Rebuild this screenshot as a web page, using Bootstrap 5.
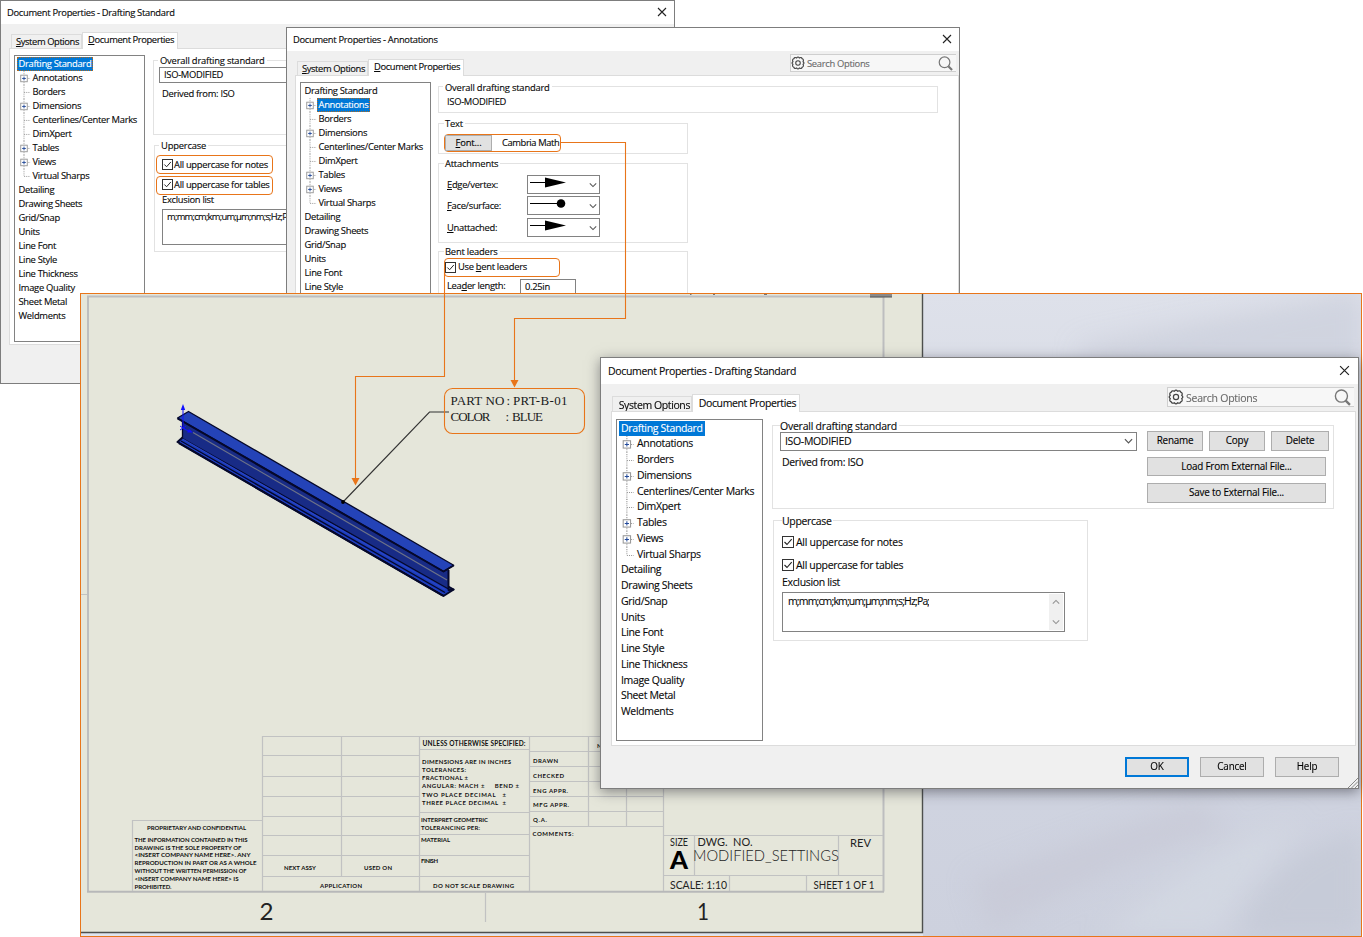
<!DOCTYPE html>
<html lang="en">
<head>
<meta charset="utf-8">
<meta name="viewport" content="width=device-width, initial-scale=1">
<title>Document Properties</title>
<link href="https://cdn.jsdelivr.net/npm/bootstrap@5.3.0/dist/css/bootstrap.min.css" rel="stylesheet">
<style>
  body { width: 1363px; height: 937px; overflow: hidden; background: #fff; color: #080808; font-family: "Open Sans", "Noto Sans", sans-serif; }
  .desk { width: 1363px; height: 937px; overflow: hidden; }
  .win { position: absolute; border: 1px solid #7d7d7d; background: #f0f0f0; font-size: 9.4px; letter-spacing: -.3px; line-height: 14px; white-space: nowrap; -webkit-text-stroke: .12px; --row: 14px; --tree: 131px; --ind: 14px; }
  .win-a { left: 0; top: 0; width: 675px; height: 384px; }
  .win-b { left: 286px; top: 27px; width: 674px; height: 384px; }
  .win-c { left: 600px; top: 357px; width: 759px; height: 432px; font-size: 10.5px; letter-spacing: -.33px; --row: 15.75px; --tree: 147px; --ind: 16px; box-shadow: 0 3px 12px rgba(40,40,50,.5); }
  .drawing, .wires { position: absolute; left: 0; top: 0; }
  .wires { pointer-events: none; }
  .titlebar { height: 23px; padding: 0 7px 0 6px; background: #fff; flex: none; }
  .win-c .titlebar { height: 26px; padding: 0 8px 0 7px; }
  .titlebar svg { margin-top: -1px; }
  .tabrow { height: 24px; padding-left: 10px; flex: none; }
  .win-c .tabrow { height: 27px; padding-left: 11px; }
  .tabx { border: 1px solid #dcdcdc; border-bottom: 0; height: 14px; width: 71px; line-height: 14px; text-align: right; padding-right: 2px; letter-spacing: -.4px; }
  .tabx.on { background: #fff; height: 17px; width: 96px; margin-bottom: -1px; padding-right: 3px; z-index: 1; }
  .win-c .tabx { height: 15px; width: 80px; line-height: 16px; padding-right: 1px; }
  .win-c .tabx.on { height: 18px; width: 108px; padding-right: 3px; }
  .searchx { width: 166px; height: 18px; border: 1px solid #cfcfcf; border-right: 0; background: #f7f7f7; color: #6a6a6a; margin: 0 3px 3px auto; padding: 1px 3px 0 0; }
  .searchx svg { margin-top: -1px; }
  .win-c .searchx { width: 187px; height: 20px; margin: 0 4px 4px auto; letter-spacing: -.25px; }
  .sheetx { border: 1px solid #dcdcdc; background: #fff; margin: 0 0 38px 8px; padding: 6px 0 0 4px; }
  .win-c .sheetx { margin: 0 2px 42px 10px; padding: 7px 0 0 4px; }
  .tree { width: var(--tree); height: 287px; border: 1px solid #828282; padding: .5px 0 0 1.5px; flex: none; }
  .win-c .tree { height: 322px; padding: .5px 0 0 2px; }
  .node { height: var(--row); line-height: var(--row); }
  .node > span { padding: 0 2px; height: 14px; }
  .win-c .node > span { height: var(--row); }
  .node > svg { width: var(--ind); height: var(--row); flex: none; overflow: visible; }
  .node > .sel { background: #0078d7; color: #fff; outline: 1px dotted #b06a20; outline-offset: -1px; }
  .win-c .node > .sel { outline: 0; }
  .grp { border: 1px solid #e2e2e2; }
  .lgd { background: #fff; line-height: 12px; margin-top: -6px; width: fit-content; padding: 0 2px; }
  .win-a .lgd, .win-b .lgd { letter-spacing: -.2px; }
  .boxed { border: 1px solid #828282; background: #fff; }
  .btn.bx { border: 1px solid #adadad; background: #e1e1e1; border-radius: 0; padding: 0; font-size: inherit; letter-spacing: -.15px; line-height: 1; color: #000; }
  .win-c .btn.bx { font-size: 9.9px; letter-spacing: -.2px; }
  .btn.bx.main { border: 2px solid #0078d7; }
  .tick { width: 11px; height: 11px; border: 1px solid #333; background: #fff; flex: none; }
  .win-c .tick { width: 12px; height: 12px; }
  .ring { border: 1px solid #e8751a; border-radius: 4px; }
  .excl { letter-spacing: -.75px; overflow: hidden; }
  .win-c .excl { letter-spacing: -.85px; }
  .lat { font-family: Lato, "Open Sans", sans-serif; }
</style>
</head>
<body>
<svg width="0" height="0" class="position-absolute">
  <defs>
    <symbol id="gear" viewBox="0 0 16 16"><path d="M6.500 2.200Q8 .2 9.500 2.200Q12 1 12.800 3.200Q15 4 13.800 6.500Q15.800 8 13.800 9.500Q15 12 12.800 12.800Q12 15 9.500 13.800Q8 15.800 6.500 13.800Q4 15 3.200 12.800Q1 12 2.200 9.500Q.2 8 2.200 6.500Q1 4 3.200 3.200Q4 1 6.500 2.200Z" fill="none" stroke="#444" stroke-width="1.300"/><circle cx="8" cy="8" r="2.600" fill="none" stroke="#444" stroke-width="1.200"/></symbol>
    <symbol id="lens" viewBox="0 0 16 16"><circle cx="7" cy="6.700" r="5.700" fill="none" stroke="#777" stroke-width="1.300"/><path d="M11 11L15 15" stroke="#777" stroke-width="2.200"/></symbol>
    <symbol id="cross" viewBox="0 0 10 10"><path d="M1 1L9 9M9 1L1 9" stroke="#222" stroke-width="1.100"/></symbol>
    <symbol id="chev" viewBox="0 0 10 6"><path d="M1 1L5 5L9 1" fill="none" stroke="#555" stroke-width="1.300"/></symbol>
    <symbol id="check" viewBox="0 0 10 10"><path d="M1.500 5L4 7.500L8.700 2.200" fill="none" stroke="#222" stroke-width="1.100"/></symbol>
    <symbol id="arrowline" viewBox="0 0 40 12"><path d="M0 5.500H18" stroke="#000"/><path d="M15 .5L36 5.500L15 10.500Z"/></symbol>
    <symbol id="dotline" viewBox="0 0 40 12"><path d="M0 5.500H30" stroke="#000"/><circle cx="31" cy="5.500" r="4.300"/></symbol>
  </defs>
</svg>

<div class="desk position-relative">

  <!-- Drafting standard dialog, back -->
  <section class="win win-a d-flex flex-column">
    <div class="titlebar d-flex align-items-center justify-content-between"><span class="ttl">Document Properties - Drafting Standard</span><svg width="10" height="10"><use href="#cross"/></svg></div>
    <div class="tabrow d-flex align-items-end"><div class="tabx"><u>S</u>ystem Options</div><div class="tabx on"><u>D</u>ocument Properties</div></div>
    <div class="sheetx d-flex flex-fill">
      <div class="tree" data-selected="Drafting Standard"></div>
      <div class="flex-fill" style="margin:5px 20px 0 8px">
        <div class="grp" style="height:75px;padding-left:4px">
          <div class="lgd">Overall drafting standard</div>
          <div class="boxed" style="height:16px;width:300px;padding-left:4px;margin-left:1px">ISO-MODIFIED</div>
          <div style="padding:4px 0 0 4px">Derived from: ISO</div>
        </div>
        <div class="grp" style="height:107px;margin:10px 0 0 1px;padding-left:1px">
          <div class="lgd" style="margin-left:3px">Uppercase</div>
          <div class="ring d-flex align-items-center" style="width:117px;height:19px;margin-top:3px;padding-left:5px"><span class="tick d-flex"><svg width="9" height="9"><use href="#check"/></svg></span><span style="padding-left:1px">All uppercase for notes</span></div>
          <div class="ring d-flex align-items-center" style="width:117px;height:19px;margin-top:2px;padding-left:5px"><span class="tick d-flex" style="margin-top:-2px"><svg width="9" height="9"><use href="#check"/></svg></span><span style="padding-left:1px;margin-top:-2px">All uppercase for tables</span></div>
          <div style="padding-left:6px;margin-top:-2px">Exclusion list</div>
          <div class="boxed excl" style="margin:2px 0 0 6px;width:280px;height:36px;padding-left:4px"><div style="width:119px;overflow:hidden">m;mm;cm;km;um;µm;nm;s;Hz;Pa;</div></div>
        </div>
      </div>
    </div>
  </section>

  <!-- Annotations dialog -->
  <section class="win win-b d-flex flex-column">
    <div class="titlebar d-flex align-items-center justify-content-between"><span class="ttl">Document Properties - Annotations</span><svg width="10" height="10"><use href="#cross"/></svg></div>
    <div class="tabrow d-flex align-items-end"><div class="tabx"><u>S</u>ystem Options</div><div class="tabx on"><u>D</u>ocument Properties</div>
      <div class="searchx d-flex align-items-center"><svg width="14" height="14"><use href="#gear"/></svg><span style="padding-left:2px">Search Options</span><svg class="ms-auto" width="15" height="15"><use href="#lens"/></svg></div></div>
    <div class="sheetx d-flex flex-fill">
      <div class="tree" data-selected="Annotations"></div>
      <div style="margin:4px 0 0 7px;width:500px">
        <div class="grp" style="height:27px;padding-left:4px"><div class="lgd" style="margin-top:-5px">Overall drafting standard</div><div style="padding:1px 0 0 4px">ISO-MODIFIED</div></div>
        <div style="width:250px">
          <div class="grp" style="height:31px;margin-top:10px;padding-left:5px"><div class="lgd" style="padding-left:1px">Text</div>
            <div class="ring d-flex align-items-center" style="width:117px;height:18px;margin-top:4px"><button class="btn bx" style="width:47px;height:16px"><u>F</u>ont...</button><span style="padding-left:10px;letter-spacing:-.4px">Cambria Math</span></div></div>
          <div class="grp" style="height:80px;margin-top:9px;padding-left:5px"><div class="lgd" style="padding-left:1px">Attachments</div>
            <div class="d-flex align-items-center" style="margin-top:5px"><span style="width:83px;padding-left:3px"><u>E</u>dge/vertex:</span><span class="boxed d-flex align-items-center justify-content-between" style="width:73px;height:19px;padding:0 2px"><svg width="40" height="12" style="margin-top:-3px"><use href="#arrowline"/></svg><svg width="8" height="6"><use href="#chev"/></svg></span></div>
            <div class="d-flex align-items-center" style="margin-top:2px"><span style="width:83px;padding-left:3px"><u>F</u>ace/surface:</span><span class="boxed d-flex align-items-center justify-content-between" style="width:73px;height:19px;padding:0 2px"><svg width="40" height="12" style="margin-top:-3px"><use href="#dotline"/></svg><svg width="8" height="6"><use href="#chev"/></svg></span></div>
            <div class="d-flex align-items-center" style="margin-top:3px"><span style="width:83px;padding-left:3px"><u>U</u>nattached:</span><span class="boxed d-flex align-items-center justify-content-between" style="width:73px;height:19px;padding:0 2px"><svg width="40" height="12" style="margin-top:-3px"><use href="#arrowline"/></svg><svg width="8" height="6"><use href="#chev"/></svg></span></div>
          </div>
          <div class="grp" style="height:80px;margin-top:8px;padding-left:5px"><div class="lgd" style="padding-left:1px">Bent leaders</div>
            <div class="ring d-flex align-items-center" style="width:116px;height:19px;padding-bottom:1px"><span class="tick d-flex"><svg width="9" height="9"><use href="#check"/></svg></span><span style="padding-left:2px">Use <u>b</u>ent leaders</span></div>
            <div class="d-flex" style="margin-top:2px"><span style="width:76px;padding-left:3px">Lea<u>d</u>er length:</span><span class="boxed" style="width:56px;height:18px;padding:0 4px">0.25in</span></div>
          </div>
        </div>
      </div>
    </div>
  </section>

  <!-- Drawing sheet -->
  <svg class="drawing" width="1363" height="937" viewBox="0 0 1363 937">
    <defs>
      <linearGradient id="sky" x1="0" y1="0" x2="0" y2="1"><stop offset="0" stop-color="#dee1ea"/><stop offset=".5" stop-color="#d2d6e2"/><stop offset="1" stop-color="#cdd1de"/></linearGradient>
      <filter id="haze" x="-20%" y="-20%" width="140%" height="140%"><feGaussianBlur stdDeviation="12"/></filter>
      <clipPath id="skyclip"><rect x="923" y="294" width="438" height="642"/></clipPath>
    </defs>
    <rect x="80" y="293" width="1282" height="644" fill="#dfe4ee"/>
    <rect x="923" y="293" width="439" height="643" fill="url(#sky)"/>
    <g clip-path="url(#skyclip)"><g filter="url(#haze)">
      <path d="M1080 345Q1230 315 1362 290V365H1080Z" fill="#c8ccd8" opacity=".6"/>
      <path d="M970 880Q1100 830 1200 800L1230 830Q1100 870 990 936Z" fill="#c6c8d5" opacity=".6"/>
      <path d="M1240 936Q1270 850 1362 830V936Z" fill="#c2c6d3" opacity=".6"/>
      <path d="M1100 936Q1200 850 1300 820L1270 860Q1230 900 1220 936Z" fill="#d6dae5" opacity=".6"/>
    </g></g>
    <rect x="81" y="294" width="841" height="638" fill="#e5e6da"/>
    <path d="M922.500 294V932.500H81" fill="none" stroke="#4d4f4d" stroke-width="1.400"/>
    <path d="M88 892V296.500H883.500V891.500" fill="none" stroke="#bdbebf" stroke-width="2"/>
    <path d="M87 891.700H884" stroke="#b7b8b9" stroke-width="2"/>
    <rect x="870" y="294" width="22" height="3" fill="#8a8a8a"/><path d="M870 297H892" stroke="#555"/>
    <path d="M690 294.500h1.500M713 294.500h2M764 294.500h3" stroke="#777"/>
    <g fill="none" stroke="#c1c2c2" stroke-width="1.200">
      <path d="M81 594.500H87M485.500 893V922"/>
      <path d="M132.500 891V820.500H262.500M262.500 891V736.500H664M341.500 737V876M419.500 737V891M529.500 737V891M588.500 737V826M626.500 737V826M663.500 737V891"/>
      <path d="M263 755.500H419M263 776.500H419M263 796.500H419M263 816.500H419M263 835.500H419M263 855.500H529M263 876.500H529M419 749.500H529M419 812.500H529M419 834.500H529"/>
      <path d="M529 751.500H663M529 766.500H663M529 781.500H663M529 796.500H663M529 811.500H663M529 826.500H663"/>
      <path d="M664 835.500H883M664 875.500H883M694.500 836V875M838.500 836V875M729.500 876V891M806.500 876V891"/>
    </g>
    <g class="lat" fill="#111" font-size="6" font-weight="700">
      <text x="147" y="830" textLength="99">PROPRIETARY AND CONFIDENTIAL</text>
      <text x="134.500" y="841.500" textLength="113">THE INFORMATION CONTAINED IN THIS</text>
      <text x="134.500" y="849.500" textLength="107">DRAWING IS THE SOLE PROPERTY OF</text>
      <text x="134.500" y="857.300" textLength="116" lengthAdjust="spacingAndGlyphs">&lt;INSERT COMPANY NAME HERE&gt;. ANY</text>
      <text x="134.500" y="865" textLength="122" lengthAdjust="spacingAndGlyphs">REPRODUCTION IN PART OR AS A WHOLE</text>
      <text x="134.500" y="873" textLength="112" lengthAdjust="spacingAndGlyphs">WITHOUT THE WRITTEN PERMISSION OF</text>
      <text x="134.500" y="880.800" textLength="104" lengthAdjust="spacingAndGlyphs">&lt;INSERT COMPANY NAME HERE&gt; IS</text>
      <text x="134.500" y="888.600" textLength="37">PROHIBITED.</text>
      <text x="284" y="869.500" textLength="32">NEXT ASSY</text>
      <text x="364" y="869.500" textLength="28">USED ON</text>
      <text x="320" y="887.800" textLength="42">APPLICATION</text>
      <text x="433" y="887.800" textLength="81">DO NOT SCALE DRAWING</text>
      <text x="422.500" y="746" textLength="103" font-size="6.500">UNLESS OTHERWISE SPECIFIED:</text>
      <text x="422" y="763.700" textLength="89">DIMENSIONS ARE IN INCHES</text>
      <text x="422" y="771.700" textLength="44">TOLERANCES:</text>
      <text x="422" y="780" textLength="46">FRACTIONAL ±</text>
      <text x="422" y="788.300" textLength="97">ANGULAR: MACH ±&#160;&#160;&#160;&#160; BEND ±</text>
      <text x="422" y="796.500" textLength="84">TWO PLACE DECIMAL&#160;&#160; ±</text>
      <text x="422" y="804.800" textLength="84">THREE PLACE DECIMAL&#160; ±</text>
      <text x="421" y="822" textLength="67">INTERPRET GEOMETRIC</text>
      <text x="421" y="830" textLength="59">TOLERANCING PER:</text>
      <text x="421" y="841.500" textLength="29">MATERIAL</text>
      <text x="421" y="862.500" textLength="17">FINISH</text>
      <text x="533" y="762.500" textLength="25">DRAWN</text>
      <text x="533" y="777.500" textLength="31">CHECKED</text>
      <text x="533" y="792.500" textLength="35">ENG APPR.</text>
      <text x="533" y="807.300" textLength="36">MFG APPR.</text>
      <text x="533" y="822.300" textLength="14">Q.A.</text>
      <text x="532.500" y="835.500" textLength="41">COMMENTS:</text>
      <text x="597" y="747.500">NAME</text>
    </g>
    <g class="lat" fill="#222">
      <text x="670" y="846" font-size="11" textLength="18" lengthAdjust="spacingAndGlyphs">SIZE</text>
      <text x="697.500" y="846" font-size="11" textLength="55" lengthAdjust="spacingAndGlyphs">DWG.&#160; NO.</text>
      <text x="850" y="847" font-size="11.500" textLength="21" lengthAdjust="spacingAndGlyphs">REV</text>
      <text x="693" y="861" font-size="16" font-weight="300" textLength="146" lengthAdjust="spacingAndGlyphs">MODIFIED_SETTINGS</text>
      <text x="670" y="869" font-size="24" font-weight="900" fill="#000" textLength="18" lengthAdjust="spacingAndGlyphs">A</text>
      <text x="670" y="889" font-size="11.500" textLength="57" lengthAdjust="spacingAndGlyphs">SCALE: 1:10</text>
      <text x="813.500" y="889" font-size="11.500" textLength="61" lengthAdjust="spacingAndGlyphs">SHEET 1 OF 1</text>
      <text x="259.500" y="920" font-size="24" textLength="14" lengthAdjust="spacingAndGlyphs">2</text>
      <text x="697" y="920" font-size="24" textLength="12" lengthAdjust="spacingAndGlyphs">1</text>
    </g>
    <!-- beam -->
    <g stroke="#05082a" stroke-linejoin="round">
      <path d="M177.500 442L182.500 437.500L453.700 589.500L443.500 596Z" fill="#1c3bb8" stroke-width="2"/>
      <path d="M182.500 421L448.500 570V589L182.500 438.500Z" fill="#182b86" stroke-width="1.300"/>
      <path d="M182.500 439L445 589.500" stroke="#2745c8" stroke-width="1.200"/>
      <path d="M181 441L445 592.500" stroke-width="1.400"/>
      <path d="M179 443L443 595.500" stroke-width="2.400"/>
      <path d="M180 441.800L443 593.800" stroke="#2442c8" stroke-width=".8"/>
      <path d="M448.500 570V590L453.700 589.500" fill="none" stroke-width="1.800"/>
      <path d="M177.500 418L188.500 411.500L453.700 565.300L443.500 571.500Z" fill="#2443b8" stroke-width="1.300"/>
      <path d="M177.500 418.500L443.500 571.500L453.700 565.500" fill="none" stroke-width="2"/>
      <path d="M193 432.500L447 580" stroke="#6d7288" stroke-width="1.200"/>
    </g>
    <g stroke="#1010ff" fill="none"><path d="M183 409V428L189 431.500M180 426L186 430M180 430L186 426"/><path d="M183 404L185.200 410H180.800ZM193 432.500L187 432.500L189 429Z" fill="#1010ff" stroke="none"/></g>
    <path d="M343 502L429.500 412H449" fill="none" stroke="#333" stroke-width="1.100"/><circle cx="343" cy="502" r="1.900"/>
    <g font-family="'Liberation Serif', serif" font-size="13" fill="#1a1a1a">
      <text x="450.500" y="404.500" textLength="54">PART NO</text><text x="506.500" y="404.500">:</text><text x="513" y="404.500" textLength="54.500">PRT-B-01</text>
      <text x="450.500" y="421" textLength="40">COLOR</text><text x="505.500" y="421">:</text><text x="512" y="421" textLength="31">BLUE</text>
    </g>
    <rect x="80.500" y="293.500" width="1281" height="643" fill="none" stroke="#e8751a"/>
  </svg>

  <!-- Callout connectors -->
  <svg class="wires" width="1363" height="937" viewBox="0 0 1363 937">
    <g fill="none" stroke="#e8751a" stroke-width="1.100"><path d="M561 142.500H625.500V318.500H514.500V381M444.500 268V376.500H355.500V478"/><rect x="444.500" y="388.500" width="140" height="45" rx="8"/></g>
    <path d="M510.500 380H518.500L514.500 387.500ZM351.500 478H359.500L355.500 485.500Z" fill="#e8751a"/>
  </svg>

  <!-- Drafting standard dialog, front -->
  <section class="win win-c d-flex flex-column">
    <div class="titlebar d-flex align-items-center justify-content-between"><span class="ttl">Document Properties - Drafting Standard</span><svg width="11" height="11"><use href="#cross"/></svg></div>
    <div class="tabrow d-flex align-items-end"><div class="tabx">System Options</div><div class="tabx on">Document Properties</div>
      <div class="searchx d-flex align-items-center"><svg width="16" height="16"><use href="#gear"/></svg><span style="padding-left:2px">Search Options</span><svg class="ms-auto" width="17" height="17"><use href="#lens"/></svg></div></div>
    <div class="sheetx d-flex flex-fill">
      <div class="tree" data-selected="Drafting Standard"></div>
      <div style="margin:6px 0 0 9px;width:562px">
        <div class="grp d-flex" style="height:84px;padding-left:7px">
          <div style="width:367px">
            <div class="lgd" style="padding-left:0;letter-spacing:-.23px">Overall drafting standard</div>
            <div class="boxed d-flex align-items-center justify-content-between" style="height:19px;width:357px;padding:0 3px 1px 4px">ISO-MODIFIED<svg width="9" height="6"><use href="#chev"/></svg></div>
            <div style="padding:4px 0 0 2px">Derived from: ISO</div>
          </div>
          <div class="d-flex flex-column" style="width:182px;margin-top:5px">
            <div class="d-flex justify-content-between"><button class="btn bx" style="width:56px;height:20px">Rename</button><button class="btn bx" style="width:56px;height:20px">Copy</button><button class="btn bx" style="width:58px;height:20px">Delete</button></div>
            <button class="btn bx" style="width:179px;height:19px;margin-top:6px">Load From External File...</button>
            <button class="btn bx" style="width:179px;height:20px;margin-top:7px">Save to External File...</button>
          </div>
        </div>
        <div class="grp" style="width:315px;height:121px;margin:11px 0 0 1px;padding-left:8px">
          <div class="lgd" style="padding-left:0">Uppercase</div>
          <div class="d-flex align-items-center" style="margin-top:8px"><span class="tick d-flex"><svg width="10" height="10"><use href="#check"/></svg></span><span style="padding-left:2px;letter-spacing:-.27px">All uppercase for notes</span></div>
          <div class="d-flex align-items-center" style="margin-top:9px"><span class="tick d-flex"><svg width="10" height="10"><use href="#check"/></svg></span><span style="padding-left:2px">All uppercase for tables</span></div>
          <div style="margin-top:3px">Exclusion list</div>
          <div class="boxed d-flex justify-content-between" style="width:283px;height:40px;margin-top:3px;padding:1px 1px 1px 5px"><span class="excl">m;mm;cm;km;um;µm;nm;s;Hz;Pa;</span><span class="d-flex flex-column justify-content-between align-items-center" style="width:14px;background:#f0f0f0;padding:5px 0"><svg width="8" height="6" style="transform:rotate(180deg);opacity:.6"><use href="#chev"/></svg><svg width="8" height="6" style="opacity:.6"><use href="#chev"/></svg></span></div>
        </div>
      </div>
    </div>
    <div class="position-absolute bottom-0 end-0 d-flex" style="gap:11px;padding:0 19px 11px 0">
      <button class="btn bx main" style="width:64px;height:20px">OK</button><button class="btn bx" style="width:64px;height:20px">Cancel</button><button class="btn bx" style="width:64px;height:20px">Help</button>
    </div>
    <svg class="position-absolute bottom-0 end-0" width="10" height="10"><path d="M0 10L10 0M3.500 10L10 3.500M7 10L10 7" stroke="#888"/></svg>
  </section>
</div>

<script>
  // Option tree: [label, depth, expandable]
  const nodes = [['Drafting Standard',0],['Annotations',1,1],['Borders',1],['Dimensions',1,1],['Centerlines/Center Marks',1],['DimXpert',1],['Tables',1,1],['Views',1,1],['Virtual Sharps',1],['Detailing',0],['Drawing Sheets',0],['Grid/Snap',0],['Units',0],['Line Font',0],['Line Style',0],['Line Thickness',0],['Image Quality',0],['Sheet Metal',0],['Weldments',0]];
  document.querySelectorAll('.tree').forEach(tree => {
    tree.innerHTML = nodes.map(([label, depth, plus]) => {
      const end = label === 'Virtual Sharps' ? 8 : 16;
      const guide = depth ? `<svg viewBox="0 0 15 15" preserveAspectRatio="xMinYMid meet"><path d="M7.500 0V${end}M7.500 8H14" fill="none" stroke="#999" stroke-dasharray="1 1"/>${plus ? '<rect x="4" y="4.500" width="7" height="7" fill="#fff" stroke="#999"/><path d="M5.500 8H9.500M7.500 6V10" stroke="#234a9a"/>' : ''}</svg>` : '';
      return `<div class="node d-flex align-items-center">${guide}<span class="${label === tree.dataset.selected ? 'sel' : ''}">${label}</span></div>`;
    }).join('');
  });
</script>
<script src="https://cdn.jsdelivr.net/npm/bootstrap@5.3.0/dist/js/bootstrap.bundle.min.js"></script>
</body>
</html>
